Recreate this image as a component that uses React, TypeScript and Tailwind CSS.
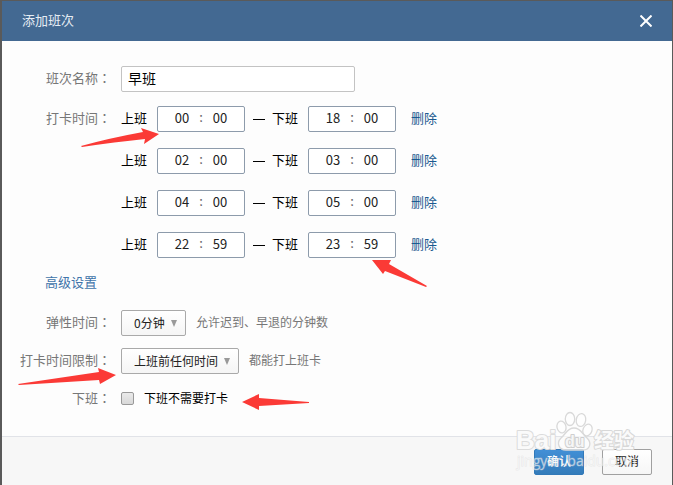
import { useState } from "react";
import type { ReactNode } from "react";

type Shift = { start: [string, string]; end: [string, string] };

const defaultShifts: Shift[] = [
  { start: ["00", "00"], end: ["18", "00"] },
  { start: ["02", "00"], end: ["03", "00"] },
  { start: ["04", "00"], end: ["05", "00"] },
  { start: ["22", "59"], end: ["23", "59"] },
];

function Label({ htmlFor, children }: { htmlFor?: string; children: ReactNode }) {
  return (
    <label
      htmlFor={htmlFor}
      className="w-[109px] shrink-0 text-right text-[#777] whitespace-nowrap"
    >
      {children}
      <span className="font-['Noto_Sans_CJK_TC',sans-serif]">：</span>
    </label>
  );
}

function TimeBox({ name, value }: { name: string; value: [string, string] }) {
  return (
    <div className="flex h-[26px] w-[88px] justify-center rounded-xs border border-[#8d9bab] bg-white text-[#222]">
      <input
        type="text"
        aria-label={`${name}小时`}
        defaultValue={value[0]}
        className="h-[22px] w-[26px] text-center outline-none"
      />
      <span className="h-5 w-3 text-center leading-5 text-[#666]">:</span>
      <input
        type="text"
        aria-label={`${name}分钟`}
        defaultValue={value[1]}
        className="h-[22px] w-[26px] text-center outline-none"
      />
    </div>
  );
}

function Dropdown({ id, options, width }: { id: string; options: string[]; width: string }) {
  return (
    <div className={`relative ${width}`}>
      <select
        id={id}
        className="h-[26px] w-full appearance-none rounded-xs border border-[#a9a9a9] bg-linear-to-b from-white to-[#f5f5f5] pl-3 text-xs text-[#222] outline-none"
      >
        {options.map((o) => (
          <option key={o}>{o}</option>
        ))}
      </select>
      <svg
        viewBox="0 0 6 7"
        className="pointer-events-none absolute right-[9px] top-[10px] h-[7px] w-[6px]"
        aria-hidden="true"
      >
        <path d="M0 0H6L3 7Z" fill="#999" />
      </svg>
    </div>
  );
}

// 红色标注箭头
function Arrows() {
  return (
    <svg
      width="673"
      height="485"
      className="pointer-events-none absolute left-0 top-0"
      fill="#fb3a36"
      aria-hidden="true"
    >
      <path d="M159 134L141 128L143 132Q110 138 81 146L82 147Q115 142 145 139L144 144Z" />
      <path d="M372 260L391 260L389 264L427 286L426 287L385 271L383 274Z" />
      <path d="M116 375L98 368L99 372L18 384L19 385L99 380L100 384Z" />
      <path d="M242 402L259 394L259 398L309 402V403L259 406V410Z" />
    </svg>
  );
}

// 水印
function Watermark() {
  return (
    <svg
      width="124"
      height="62"
      viewBox="514 410 124 62"
      className="pointer-events-none absolute bottom-[13px] right-[35px]"
      aria-hidden="true"
    >
      <g fill="#fff" stroke="#d9d9d9" strokeWidth="1.3" fillOpacity="0.6">
        <ellipse cx="561.5" cy="427" rx="4.5" ry="6" transform="rotate(-12 561.5 427)" />
        <ellipse cx="570" cy="419" rx="4.7" ry="6.5" />
        <ellipse cx="581" cy="420" rx="4.7" ry="6.5" transform="rotate(10 581 420)" />
        <ellipse cx="587.5" cy="430" rx="4.5" ry="6" transform="rotate(20 587.5 430)" />
        <path d="M574 428C567 428 566 434 561 438C556 443 559 450 566 450H583C590 450 592 443 587 438C582 434 581 428 574 428Z" />
      </g>
      <g
        fontFamily="'Liberation Sans', 'Noto Sans CJK SC', sans-serif"
        fontWeight="bold"
        paintOrder="stroke"
        strokeLinejoin="round"
      >
        <text x="516" y="449" fontSize="26" fill="#fafafa" stroke="#dcdcdc" strokeWidth="2">
          Bai
        </text>
        <text x="565" y="447" fontSize="16" fill="#f6f6f6" stroke="#cfcfcf" strokeWidth="2">
          du
        </text>
        <text x="594" y="448" fontSize="20" fill="#fafafa" stroke="#d8d8d8" strokeWidth="2">
          经验
        </text>
      </g>
      <text
        x="517"
        y="466"
        fontSize="14"
        fontFamily="'Open Sans', sans-serif"
        fill="#fff"
        fillOpacity="0.55"
        stroke="#ccc"
        strokeOpacity="0.35"
        strokeWidth="1"
        paintOrder="stroke"
      >
        jingyan.baidu.com
      </text>
    </svg>
  );
}

export default function App() {
  const [shifts, setShifts] = useState(defaultShifts);
  const [noCheckout, setNoCheckout] = useState(false);

  const removeShift = (shift: Shift) => {
    setShifts((prev) => prev.filter((s) => s !== shift));
  };

  return (
    <div className="relative flex min-h-screen flex-col bg-[#5a5a5a] pl-0.5 pr-px pt-px text-[13px] leading-5 text-black font-['Noto_Sans_CJK_SC',sans-serif]">
      <header className="flex h-10 items-center justify-between bg-[#436992] px-5 text-[#e6edf4]">
        <h1 className="pb-0.5">添加班次</h1>
        <button type="button" aria-label="关闭" className="text-white">
          <svg width="12" height="12" viewBox="0 0 12 12" stroke="currentColor" strokeWidth="2">
            <path d="M0.5 0.5L11.5 11.5M11.5 0.5L0.5 11.5" />
          </svg>
        </button>
      </header>

      <main className="bg-[#fdfdfd] pb-7 pt-[25px]">
        <div className="flex gap-2.5 leading-6">
          <Label htmlFor="shift-name">班次名称</Label>
          <input
            id="shift-name"
            type="text"
            defaultValue="早班"
            className="h-[26px] w-[234px] rounded-xs border border-[#c3c3c3] bg-white px-1.5 pb-0.5 text-sm outline-none"
          />
        </div>

        <div className="mt-3.5 flex gap-2.5 leading-6">
          <Label>打卡时间</Label>
          <div className="flex flex-col gap-4">
            {shifts.map((shift) => (
              <div key={shift.start.join()} className="flex items-start">
                <span className="mr-2.5">上班</span>
                <TimeBox name="上班" value={shift.start} />
                <span className="ml-2 mr-[7px] mt-[13px] h-px w-3 bg-black" />
                <span className="mr-2.5">下班</span>
                <TimeBox name="下班" value={shift.end} />
                <button
                  type="button"
                  onClick={() => removeShift(shift)}
                  className="ml-[15px] text-[#1c5a90]"
                >
                  删除
                </button>
              </div>
            ))}
          </div>
        </div>

        <div className="mt-3.5 pl-[43px]">
          <a href="#advanced" className="text-[#3f74aa]">
            高级设置
          </a>
        </div>

        <div id="advanced" className="mt-[18px] flex gap-2.5 leading-6">
          <Label htmlFor="flex-time">弹性时间</Label>
          <Dropdown id="flex-time" width="w-[65px]" options={["0分钟", "5分钟", "10分钟"]} />
          <span className="text-xs/6 text-[#777]">允许迟到、早退的分钟数</span>
        </div>

        <div className="mt-3 flex gap-2.5 leading-6">
          <Label htmlFor="limit">打卡时间限制</Label>
          <Dropdown id="limit" width="w-[118px]" options={["上班前任何时间", "上班前1小时"]} />
          <span className="text-xs/6 text-[#777]">都能打上班卡</span>
        </div>

        <div className="mt-3.5 flex items-center gap-2.5">
          <Label htmlFor="no-checkout">下班</Label>
          <input
            id="no-checkout"
            type="checkbox"
            checked={noCheckout}
            onChange={(e) => setNoCheckout(e.target.checked)}
            className="size-[13px] appearance-none rounded-xs border border-[#999] bg-linear-to-b from-[#eaeaea] to-[#d8d8d8] checked:bg-[#436992]"
          />
          <label htmlFor="no-checkout" className="text-xs">
            下班不需要打卡
          </label>
        </div>
      </main>

      <footer className="flex flex-1 items-start justify-end gap-[18px] border-t border-[#e1e3e8] bg-[#f7f7f7] pb-2.5 pr-5 pt-3">
        <button
          type="button"
          className="h-[26px] w-[50px] rounded-xs border border-[#3279b8] bg-linear-to-b from-[#428fd6] to-[#347cba] pb-0.5 text-xs font-medium text-white"
        >
          确认
        </button>
        <button
          type="button"
          className="h-[26px] w-[50px] rounded-xs border border-[#a0a0a0] bg-linear-to-b from-white to-[#f6f6f6] pb-0.5 text-xs text-[#222]"
        >
          取消
        </button>
      </footer>

      <Arrows />
      <Watermark />
    </div>
  );
}
